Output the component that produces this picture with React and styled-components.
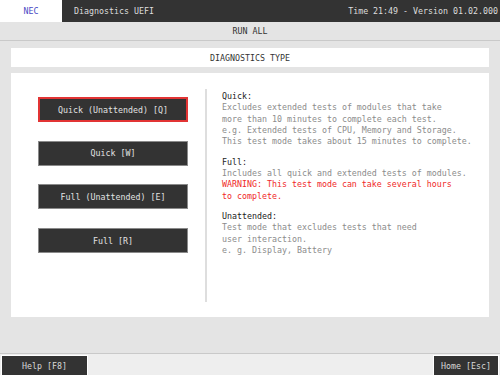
import React from "react";
import styled, { createGlobalStyle } from "styled-components";

const GlobalStyle = createGlobalStyle`
  html, body {
    margin: 0;
    padding: 0;
    background: #e4e4e4;
    overflow: hidden;
  }
  * {
    box-sizing: border-box;
  }
`;

const Screen = styled.div`
  width: 500px;
  height: 375px;
  display: flex;
  flex-direction: column;
  background: #e4e4e4;
  font-family: "DejaVu Sans Mono", "Liberation Mono", monospace;
  font-size: 8.3px;
  color: #333;
`;

const Header = styled.header`
  height: 22px;
  display: flex;
  align-items: stretch;
  background: #333;
  color: #ddd;
`;

const BrandTab = styled.div`
  width: 62px;
  background: #fff;
  color: #4a4ac4;
  display: flex;
  align-items: center;
  justify-content: center;
`;

const HeaderTitle = styled.div`
  flex: 1;
  display: flex;
  align-items: center;
  padding-left: 12px;
`;

const HeaderInfo = styled.div`
  display: flex;
  align-items: center;
  padding-right: 2px;
`;

const RunAllBar = styled.div`
  height: 19px;
  display: flex;
  align-items: center;
  justify-content: center;
  border-bottom: 1px solid #c9c9c9;
  color: #333;
`;

const Body = styled.main`
  flex: 1;
  display: flex;
  flex-direction: column;
  gap: 6px;
  padding: 7px 11px 0;
`;

const TypeBox = styled.div`
  height: 19px;
  background: #fff;
  display: flex;
  align-items: center;
  justify-content: center;
`;

const Panel = styled.section`
  height: 244px;
  background: #fff;
  display: flex;
  padding: 16px 0 15px;
`;

const ButtonColumn = styled.div`
  width: 194px;
  padding: 8px 0 0 27px;
  display: flex;
  flex-direction: column;
  gap: 18.7px;
`;

const ModeButton = styled.div`
  width: 150px;
  height: 25px;
  display: flex;
  align-items: center;
  justify-content: center;
  background: #333;
  color: #e2e2e2;
  border: 1px solid ${(p) => (p.$active ? "#e23434" : "#8a8a8a")};
  box-shadow: ${(p) => (p.$active ? "inset 0 0 0 1px #e23434" : "none")};
`;

const Divider = styled.div`
  width: 2px;
  background: #dedede;
`;

const InfoColumn = styled.div`
  padding: 2px 0 0 15px;
  line-height: 11.33px;
  display: flex;
  flex-direction: column;
  gap: 9px;
`;

const InfoBlock = styled.div``;

const InfoTitle = styled.div`
  color: #222;
`;

const InfoLine = styled.div`
  color: ${(p) => (p.$warn ? "#f02828" : "#8c8c8c")};
`;

const Footer = styled.footer`
  height: 22px;
  display: flex;
  justify-content: space-between;
  align-items: stretch;
  background: #eeeeee;
  border-top: 1px solid #c9c9c9;
  padding: 1px 1px 0 1px;
`;

const KeyButton = styled.div`
  width: ${(p) => p.$width || "auto"};
  padding: 0 7px;
  display: flex;
  align-items: center;
  justify-content: center;
  background: #333;
  color: #d8d8d8;
  border: 1px solid #fff;
  border-bottom: none;
  white-space: pre;
`;

const modes = [
  { label: "Quick (Unattended) [Q]", active: true },
  { label: "Quick [W]" },
  { label: "Full (Unattended) [E]" },
  { label: "Full [R]" },
];

const App = () => {
  return (
    <Screen>
      <GlobalStyle />
      <Header>
        <BrandTab>NEC</BrandTab>
        <HeaderTitle>Diagnostics UEFI</HeaderTitle>
        <HeaderInfo>Time 21:49 - Version 01.02.000</HeaderInfo>
      </Header>
      <RunAllBar>RUN ALL</RunAllBar>
      <Body>
        <TypeBox>DIAGNOSTICS TYPE</TypeBox>
        <Panel>
          <ButtonColumn>
            {modes.map((m) => (
              <ModeButton key={m.label} $active={m.active}>
                {m.label}
              </ModeButton>
            ))}
          </ButtonColumn>
          <Divider />
          <InfoColumn>
            <InfoBlock>
              <InfoTitle>Quick:</InfoTitle>
              <InfoLine>Excludes extended tests of modules that take</InfoLine>
              <InfoLine>more than 10 minutes to complete each test.</InfoLine>
              <InfoLine>e.g. Extended tests of CPU, Memory and Storage.</InfoLine>
              <InfoLine>This test mode takes about 15 minutes to complete.</InfoLine>
            </InfoBlock>
            <InfoBlock>
              <InfoTitle>Full:</InfoTitle>
              <InfoLine>Includes all quick and extended tests of modules.</InfoLine>
              <InfoLine $warn>WARNING: This test mode can take several hours</InfoLine>
              <InfoLine $warn>to complete.</InfoLine>
            </InfoBlock>
            <InfoBlock>
              <InfoTitle>Unattended:</InfoTitle>
              <InfoLine>Test mode that excludes tests that need</InfoLine>
              <InfoLine>user interaction.</InfoLine>
              <InfoLine>e. g. Display, Battery</InfoLine>
            </InfoBlock>
          </InfoColumn>
        </Panel>
      </Body>
      <Footer>
        <KeyButton $width="87px">Help [F8]</KeyButton>
        <KeyButton>Home [Esc]</KeyButton>
      </Footer>
    </Screen>
  );
};

export default App;
